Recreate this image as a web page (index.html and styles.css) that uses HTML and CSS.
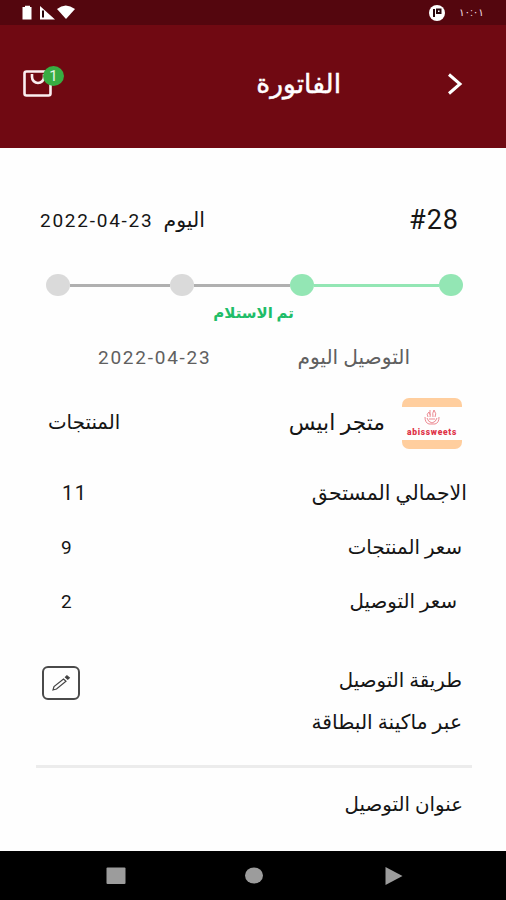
FILE: index.html
```html
<!DOCTYPE html>
<html lang="ar" dir="rtl">
<head>
    <meta charset="UTF-8">
    <meta name="viewport" content="width=device-width, initial-scale=1.0">
    <title>الفاتورة</title>
    <link rel="stylesheet" href="styles.css">
</head>
<body>
    <div class="status-bar">
        <div class="status-right">
            <span class="clock">١٠:٠١</span>
            <svg width="16" height="16" viewBox="0 0 16 16"><circle cx="8" cy="8" r="8" fill="#fff"/><path d="M5 4v8M8 4.500h3.500v3.500H8z" fill="none" stroke="#27050a" stroke-width="2"/></svg>
        </div>
        <svg class="status-left" width="54" height="16" viewBox="0 0 54 16">
            <path d="M3 2V.8h5V2h1.500v12.500h-9V2z" fill="#fff"/>
            <path d="M18 1l15 13.500H18z" fill="#fff"/>
            <path d="M20 5.500h2v7h-2z" fill="#27050a"/>
            <path d="M35 4Q43.500-3 53 4L44 14z" fill="#fff"/>
        </svg>
    </div>

    <header class="header">
        <svg class="back" width="16" height="24" viewBox="0 0 16 24"><path d="M2 2.500l11 9.500L2 21.500" fill="none" stroke="#fff" stroke-width="3"/></svg>
        <h1 class="title">الفاتورة</h1>
        <div class="cart">
            <svg width="30" height="28" viewBox="0 0 30 28"><rect x="2.500" y="1.500" width="26" height="24" rx="2" fill="none" stroke="#fbeef0" stroke-width="2.600"/><path d="M10 4v3a6 6 0 0 0 12 0V4" fill="none" stroke="#fbeef0" stroke-width="2.600"/></svg>
            <span class="badge">1</span>
        </div>
    </header>

    <main class="invoice">
        <div class="row order-row">
            <span class="order-number" dir="ltr">#28</span>
            <div class="order-date"><span class="day">اليوم</span><span class="date">2022-04-23</span></div>
        </div>

        <div class="progress">
            <span class="dot done"></span>
            <span class="line line-first done"></span>
            <span class="dot done"></span>
            <span class="line line-second"></span>
            <span class="dot"></span>
            <span class="line"></span>
            <span class="dot"></span>
        </div>
        <div class="progress-label">تم الاستلام</div>

        <div class="row delivery-row">
            <span class="delivery-label">التوصيل اليوم</span>
            <span class="date">2022-04-23</span>
        </div>

        <div class="row store-row">
            <div class="store-logo">
                <svg width="16" height="17" viewBox="0 0 16 17" fill="none" stroke="#ec8991" stroke-width="1"><path d="M4 8Q2 5 5 3Q7 6 6 8M9 8Q8 4 10 1Q13 5 11 8M6 1v5M1 8q0 6 4 7h6q4-1 4-7M3 9q1 4 5 5q4-1 5-5M5 10h6"/></svg>
                <span class="logo-text">abissweets</span>
            </div>
            <span class="store-name">متجر ابيس</span>
            <span class="products">المنتجات</span>
        </div>

        <div class="row total-row total-due">
            <span class="label-due">الاجمالي المستحق</span>
            <span class="amount amount-due">11</span>
        </div>
        <div class="row total-row total-products">
            <span>سعر المنتجات</span>
            <span class="amount">9</span>
        </div>
        <div class="row total-row total-delivery">
            <span>سعر التوصيل</span>
            <span class="amount">2</span>
        </div>

        <div class="row method-row">
            <div class="method">
                <div class="method-title">طريقة التوصيل</div>
                <div class="method-value">عبر ماكينة البطاقة</div>
            </div>
            <div class="edit">
                <svg width="20" height="18" viewBox="0 0 20 18" fill="none" stroke="#444" stroke-width="1.200"><path d="M2 16l1-3.500L12.500 5l2.500 2.300L5.500 15z"/><path d="M14.500 3.200l1.400-1.300 2.400 2-1.500 1.400z" fill="#333"/></svg>
            </div>
        </div>

        <div class="address">عنوان التوصيل</div>
    </main>

    <nav class="nav-bar">
        <svg width="18" height="18" viewBox="0 0 18 18"><path d="M.5 0L17.500 9L.5 18z" fill="#9c9c9c"/></svg>
        <svg class="home" width="18" height="18" viewBox="0 0 18 18"><ellipse cx="9" cy="8.500" rx="9" ry="8" fill="#9c9c9c"/></svg>
        <svg width="20" height="18" viewBox="0 0 20 18"><rect x=".5" y=".5" width="19" height="16.500" rx="1" fill="#9c9c9c"/></svg>
    </nav>
</body>
</html>
```
FILE: styles.css
```css
* {
    box-sizing: border-box;
}
body {
    margin: 0;
    height: 900px;
    display: flex;
    flex-direction: column;
    overflow: hidden;
    background-color: #fefefe;
    color: #151515;
    font-family: Roboto, "DejaVu Sans", sans-serif;
    font-size: 19.8px;
    white-space: nowrap;
}
svg {
    display: block;
    flex: none;
}
.status-bar {
    height: 25px;
    background-color: #54060e;
    display: flex;
    justify-content: space-between;
    padding: 5px 22px 0 22px;
}
.status-right {
    display: flex;
    gap: 14px;
}
.clock {
    color: #f0dfe1;
    font-size: 10.5px;
    line-height: 16px;
}
.header {
    height: 123px;
    background-color: #700912;
    display: flex;
    align-items: center;
    padding: 0 43px 6px 22px;
}
.title {
    margin: 0 106px 0 0;
    color: #fff;
    font-size: 26.5px;
    font-weight: 500;
    line-height: 40px;
    -webkit-text-stroke: 0.5px #fff;
}
.cart {
    position: relative;
    margin-right: auto;
}
.badge {
    position: absolute;
    left: 21px;
    top: -4px;
    width: 21px;
    height: 20px;
    border-radius: 50%;
    background-color: #38ac42;
    color: #e5f5e5;
    font-size: 15px;
    line-height: 20px;
    text-align: center;
}
.invoice {
    flex: 1;
    padding-top: 42px;
}
.row {
    display: flex;
    align-items: center;
    justify-content: space-between;
}
.order-row {
    height: 60px;
    padding: 0 47px 0 40px;
}
.order-number {
    font-size: 27px;
    letter-spacing: 1px;
}
.order-date {
    display: flex;
    align-items: center;
    gap: 10px;
}
.day {
    font-size: 20.5px;
}
.date {
    font-size: 19px;
    letter-spacing: 1.75px;
}
.progress {
    display: flex;
    align-items: center;
    height: 24px;
    margin: 23px 43px 0 46px;
}
.dot {
    width: 24px;
    height: 22px;
    border-radius: 50%;
    background-color: #dadada;
}
.line {
    flex: 100;
    height: 3px;
    background-color: #b0b0b0;
}
.line-first {
    flex: 125;
}
.line-second {
    flex: 96;
}
.done {
    background-color: #93e6b4;
}
.progress-label {
    height: 20px;
    margin: 6px 212px 0 0;
    color: #20bd68;
    font-size: 15px;
    font-weight: bold;
    line-height: 20px;
}
.delivery-row {
    height: 30px;
    margin-top: 19px;
    padding: 0 96px 0 98px;
    color: #606060;
}
.delivery-label {
    font-size: 20.2px;
}
.store-row {
    height: 50px;
    margin-top: 26px;
    padding: 0 44px 0 48px;
}
.store-logo {
    width: 60px;
    height: 51px;
    border-top: 9px solid #ffce9e;
    border-bottom: 9px solid #ffce9e;
    border-radius: 7px;
    padding-top: 2px;
    display: flex;
    flex-direction: column;
    align-items: center;
}
.logo-text {
    color: #df3247;
    font-size: 8.5px;
    font-weight: 900;
    letter-spacing: 0.7px;
    line-height: 12px;
}
.store-name {
    margin: -2px 17px 0 auto;
    font-size: 21.8px;
}
.products {
    margin-top: -2px;
}
.total-row {
    height: 54px;
}
.total-due {
    height: 55px;
    margin-top: 17px;
    padding: 0 39px 0 62px;
}
.total-products {
    padding: 0 44px 0 61px;
}
.total-delivery {
    padding: 0 49px 0 61px;
}
.label-due {
    font-size: 20.5px;
}
.amount {
    font-size: 19px;
}
.amount-due {
    font-size: 20px;
    letter-spacing: 1.5px;
}
.method-row {
    height: 112px;
    margin: 28px 34px 0 36px;
    padding: 10px 10px 0 6px;
    align-items: flex-start;
    border-bottom: 3px solid #ececec;
}
.method-title,
.method-value {
    height: 41px;
    line-height: 30px;
}
.method-value {
    font-size: 20.3px;
}
.edit {
    width: 38px;
    height: 34px;
    border: 2px solid #4a4a4a;
    border-radius: 6px;
    display: flex;
    align-items: center;
    justify-content: center;
}
.address {
    margin: 22px 43px 0 0;
    line-height: 30px;
}
.nav-bar {
    height: 49px;
    background-color: #000;
    display: flex;
    align-items: center;
    justify-content: space-between;
    padding: 0 103px 0 106px;
}
.home {
    margin-right: 4px;
}
```
